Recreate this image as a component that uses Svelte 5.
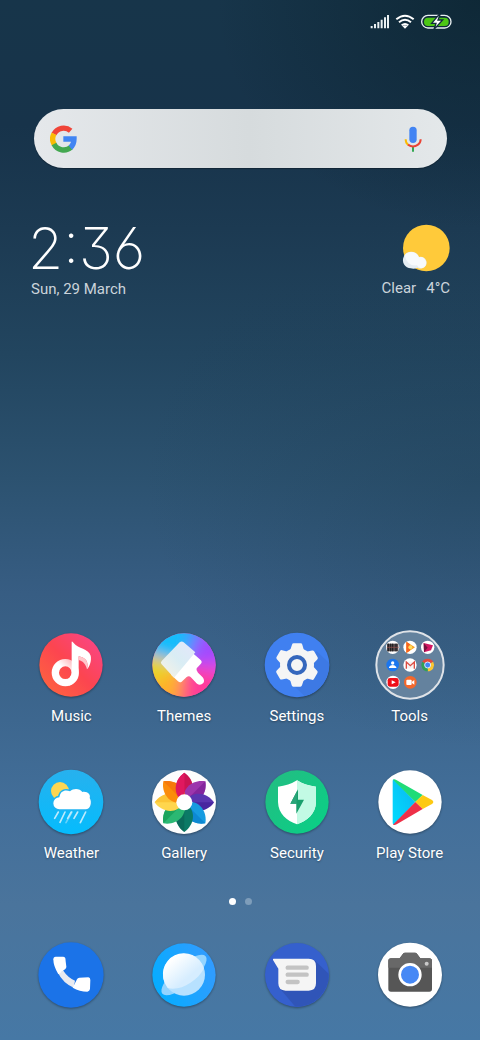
<script>
  const petals = [
    ['#e0185f', '#c2124f'],
    ['#9c35ad', '#7a1f96'],
    ['#5a35b0', '#42219a'],
    ['#169be0', '#0a80cc'],
    ['#0b7a66', '#0a6455'],
    ['#2bb873', '#159c56'],
    ['#ffd64d', '#fbbd2c'],
    ['#fb8c0a', '#f3700c']
  ];
  const rows = [
    ['Music', 'Themes', 'Settings', 'Tools'],
    ['Weather', 'Gallery', 'Security', 'Play Store']
  ];
  const dock = ['Phone', 'Browser', 'Messages', 'Camera'];
  let query = $state('');
</script>

{#snippet icon(name)}
  {#if name === 'Music'}
    <svg class="icon" viewBox="16 26 216 216" aria-hidden="true">
      <defs>
        <linearGradient id="mu" x1="0" y1="1" x2="1" y2="0"><stop offset="0" stop-color="#ff6a3c" /><stop offset=".5" stop-color="#fc4550" /><stop offset="1" stop-color="#f94590" /></linearGradient>
        <linearGradient id="mn" x1="0" y1="1" x2="1" y2="0"><stop offset="0" stop-color="#fff" /><stop offset=".55" stop-color="#fff" /><stop offset="1" stop-color="#ffb4b8" /></linearGradient>
      </defs>
      <circle cx="124" cy="134" r="95" fill="url(#mu)" />
      <circle cx="107" cy="157" r="30" fill="none" stroke="url(#mn)" stroke-width="22" />
      <path d="M126 64 Q128 62 132 68 C146 86 176 84 183 106 C186 120 181 137 172 147 C177 126 171 113 147 108 V157 A40 40 0 0 1 118 196 L122 168 Q126 163 126 157Z" fill="#fff" />
      <path d="M147 108 C171 113 177 126 172 147 C169 132 160 122 147 119Z" fill="#ffc7cb" />
    </svg>
  {:else if name === 'Themes'}
    <svg class="icon" viewBox="354 26 216 216" aria-hidden="true">
      <defs>
        <clipPath id="tc"><circle cx="462" cy="134" r="95" /></clipPath>
        <filter id="tb" x="-50%" y="-50%" width="200%" height="200%"><feGaussianBlur stdDeviation="20" /></filter>
        <linearGradient id="tp" x1="0" y1="1" x2="1" y2="0"><stop offset="0" stop-color="#fcf3e4" /><stop offset=".5" stop-color="#d9edf4" /><stop offset="1" stop-color="#e5e6fc" /></linearGradient>
      </defs>
      <g clip-path="url(#tc)">
        <path d="M354 26h216v216H354z" fill="#e75bb0" />
        <g filter="url(#tb)">
          <path d="M462 134 334 90V-10h170z" fill="#19bdfb" />
          <path d="M462 134 480 -10h80v75z" fill="#3d8cff" />
          <path d="M462 134 520 30h90v110z" fill="#a04cff" />
          <path d="M462 134 610 120v70z" fill="#e04be0" />
          <path d="M462 134 610 180v100H460z" fill="#ff3b9a" />
          <path d="M462 134 480 280h-70z" fill="#ff6c62" />
          <path d="M462 134 430 280h-110v-90z" fill="#ffb02c" />
          <path d="M462 134 310 220V90z" fill="#e8d52c" />
        </g>
      </g>
      <path d="M480 91 512 119Q518 125 512 131L500 144Q497 150 504 157L518 171Q525 181 520 188Q511 197 501 190L484 172Q477 165 470 170L455 184Q450 188 444 183L423 163Z" fill="#fff" />
      <path d="M395 132Q390 127 395 122L449 66Q455 61 461 66L496 96 432 172Z" fill="url(#tp)" />
    </svg>
  {:else if name === 'Settings'}
    <svg class="icon" viewBox="17 26 216 216" aria-hidden="true">
      <circle cx="125" cy="134" r="97" fill="#4080f0" />
      <path d="M184 93 221 127A97 97 0 0 1 148 228L107 188Z" fill="#3d79e4" />
      <g fill="#f5f5f5">
        <circle cx="125" cy="134" r="51" />
        {#each [0, 60, 120, 180, 240, 300] as a}
          <path d="M103 94 110 73Q111 69 115 69H136Q140 69 141 73L147 94Z" transform="rotate({a} 125 134)" />
        {/each}
      </g>
      <circle cx="125" cy="134" r="24" fill="none" stroke="#3567bd" stroke-width="12" />
    </svg>
  {:else if name === 'Tools'}
    <svg class="icon folder" viewBox="26 27 216 216" aria-hidden="true">
      <circle cx="134" cy="135" r="101" fill="#64829e" stroke="#dfe3e8" stroke-width="6" />
      <g fill="#fff">
        <circle cx="82" cy="82" r="20" /><circle cx="134" cy="82" r="20" /><circle cx="187" cy="82" r="20" />
        <circle cx="134" cy="135" r="20" /><circle cx="83" cy="187" r="20" />
      </g>
      <path d="M65 71h34v23H65z" fill="#554b4d" />
      <path d="M69 71v23M76 71v23M82 71v23M92 71v23" stroke="#17191c" stroke-width="3" />
      <path d="M64 82h36" stroke="#9f5551" stroke-width="2" />
      <path d="M123 65 149 82 123 99Z" fill="#fb9d1e" /><path d="M123 65 134 73V92L123 99Z" fill="#f6631f" /><circle cx="135" cy="82" r="6" fill="#ffdc5b" />
      <path d="M175 69 203 76 197 91 176 97Z" fill="#d21662" /><path d="M175 69 187 83 176 97Z" fill="#77113f" />
      <circle cx="82" cy="135" r="19" fill="#1b76ee" />
      <circle cx="82" cy="129" r="5" fill="#fff" /><path d="M71 144V141Q75 135 82 135T93 141V144Z" fill="#fff" />
      <path d="M122 125H148V145H122Z" fill="#f5f1f1" /><path d="M123 146V126L135 137 147 126V146" fill="none" stroke="#dc4c43" stroke-width="4" />
      <path d="M187 135 170.500 125.500A19 19 0 0 1 203.500 125.500Z" fill="#e34a3d" />
      <path d="M187 135 203.500 125.500A19 19 0 0 1 187 154Z" fill="#fbc632" />
      <path d="M187 135 187 154A19 19 0 0 1 170.500 125.500Z" fill="#32a056" />
      <circle cx="187" cy="135" r="9" fill="#4486f4" stroke="#dce9ff" stroke-width="3" />
      <rect x="67" y="174" width="33" height="26" rx="7" fill="#ee0e18" /><path d="M79 181 91 187 79 193Z" fill="#fff" />
      <circle cx="135" cy="187" r="19" fill="#f4682c" /><rect x="123" y="179" width="16" height="16" rx="3" fill="#fff" /><path d="M140 185 147 180V194L140 189Z" fill="#fff" />
    </svg>
  {:else if name === 'Weather'}
    <svg class="icon" viewBox="16 17 216 216" aria-hidden="true">
      <defs><linearGradient id="we" x1="0" y1="0" x2="0" y2="1"><stop offset="0" stop-color="#27b1ee" /><stop offset="1" stop-color="#05bcfd" /></linearGradient></defs>
      <circle cx="124" cy="125" r="97" fill="url(#we)" />
      <circle cx="91" cy="92" r="27" fill="#fdd652" />
      <path d="M89 147A18 18 0 0 1 89 111C92 91 107 87 121 93C132 82 151 84 158 95C174 92 184 104 180 113C188 126 182 147 168 147Z" fill="#fff" stroke="#1fb3f2" stroke-width="9" />
      <path d="M89 147A18 18 0 0 1 89 111C92 91 107 87 121 93C132 82 151 84 158 95C174 92 184 104 180 113C188 126 182 147 168 147Z" fill="#fff" />
      <g stroke="#bdeafd" stroke-width="5" stroke-linecap="round"><path d="M86 155 75 174M106 155 91 186M125 155 114 174M144 155 133 174M168 155 152 187" /><path d="M127 155 109 187" opacity=".5" /></g>
    </svg>
  {:else if name === 'Gallery'}
    <svg class="icon" viewBox="354 17 216 216" aria-hidden="true">
      <circle cx="462" cy="125" r="96" fill="#fdfdfd" />
      {#each petals as [light, dark], i}
        <g transform="rotate({i * 45} 463 126)">
          <path d="M463 126C425 104 432 58 463 37C494 58 501 104 463 126Z" fill={light} />
          <path d="M463 37C494 58 501 104 463 126Z" fill={dark} opacity=".7" />
        </g>
      {/each}
      <path d="M463 126C425 104 432 58 463 37V126Z" fill="#e0185f" />
      <circle cx="463" cy="126" r="24" fill="#fff" />
    </svg>
  {:else if name === 'Security'}
    <svg class="icon" viewBox="18 17 216 216" aria-hidden="true">
      <defs><linearGradient id="se" x1="0" y1="0" x2="1" y2="1"><stop offset="0" stop-color="#25bc82" /><stop offset="1" stop-color="#08d086" /></linearGradient></defs>
      <circle cx="126" cy="125" r="95" fill="url(#se)" />
      <path d="M126 60Q151 76 183 79V125C182 160 157 181 126 192C95 181 70 160 69 125V79Q101 76 126 60Z" fill="#fff" />
      <path d="M126 60Q151 76 183 79V125C182 160 157 181 126 192Z" fill="#c2fae4" />
      <path d="M129 87 106 130H124V160L147 118H129Z" fill="#189f6c" /><path d="M126 92 106 130H124V160Z" fill="#2aa579" />
    </svg>
  {:else if name === 'Play Store'}
    <svg class="icon" viewBox="356 17 216 216" aria-hidden="true">
      <defs><linearGradient id="pl" x1="1" y1="0" x2="0" y2="1"><stop offset="0" stop-color="#0bb5f0" /><stop offset="1" stop-color="#02dcff" /></linearGradient></defs>
      <circle cx="464" cy="125" r="95" fill="#fff" />
      <path d="M412 62Q412 57 416 58L480 125 416 193Q412 193 412 188Z" fill="url(#pl)" />
      <path d="M413 58Q417 55 423 59L502 104 480 125Z" fill="#20dc78" />
      <path d="M502 104 530 119Q538 125 530 131L502 146 480 125Z" fill="#fdc913" />
      <path d="M480 125 502 146 424 192Q418 195 413 193Z" fill="#ee3048" />
    </svg>
  {:else if name === 'Phone'}
    <svg class="icon" viewBox="14 148 216 216" aria-hidden="true">
      <circle cx="122" cy="256" r="98" fill="#1b73e8" />
      <path d="M83 249 99 243Q112 263 134 273L130 294Q97 279 83 249Z" fill="#e8eaf0" />
      <path d="M76 201H99Q104 201 105 206L108 231Q108 235 105 238L84 254Q69 229 69 209Q69 201 76 201Z" fill="#fff" />
      <path d="M127 294 140 269Q142 265 147 264L174 263Q180 264 180 271L179 298Q178 305 171 306Q148 306 127 294Z" fill="#fff" />
    </svg>
  {:else if name === 'Browser'}
    <svg class="icon" viewBox="353 148 216 216" aria-hidden="true">
      <defs>
        <linearGradient id="br" x1="0" y1=".7" x2="1" y2=".3"><stop offset="0" stop-color="#04adff" /><stop offset="1" stop-color="#339bff" /></linearGradient>
        <linearGradient id="bp" x1="0" y1="0" x2="1" y2="1"><stop offset=".2" stop-color="#fff" /><stop offset=".65" stop-color="#d6edff" /></linearGradient>
      </defs>
      <circle cx="461" cy="256" r="95" fill="url(#br)" />
      <ellipse cx="461" cy="256" rx="86" ry="30" transform="rotate(-41 461 256)" fill="#94d4ff" />
      <circle cx="461" cy="255" r="63" fill="#b7e1ff" />
      <path d="M409 290A63 63 0 1 1 521 236C500 277 447 306 412 295Z" fill="url(#bp)" />
    </svg>
  {:else if name === 'Messages'}
    <svg class="icon" viewBox="61 148 216 216" aria-hidden="true">
      <circle cx="169" cy="256" r="96" fill="#3560cd" />
      <path d="M221 211 264 252A96 96 0 0 1 164 351L117 296Z" fill="#3055b8" />
      <path d="M99 207H204Q226 207 226 229V281Q226 303 204 303H135Q113 303 113 281V237L97 211Q96 207 99 207Z" fill="#f5f5f5" />
      <path d="M141 234H198M141 255H198M141 277H171" stroke="#c3c3c3" stroke-width="13" stroke-linecap="round" />
    </svg>
  {:else}
    <svg class="icon" viewBox="400 148 216 216" aria-hidden="true">
      <circle cx="508" cy="255" r="96" fill="#fff" />
      <path d="M451 206H477L487 192Q489 189 493 189H523Q527 189 529 192L539 206H566Q574 206 574 214V298Q574 306 566 306H451Q443 306 443 298V214Q443 206 451 206Z" fill="#565656" />
      <path d="M451 206H477L487 192Q489 189 493 189H523Q527 189 529 192L539 206H566Q574 206 574 214V234H443V214Q443 206 451 206Z" fill="#686868" />
      <circle cx="508" cy="255" r="31" fill="#4688f5" stroke="#fff" stroke-width="8" />
      <circle cx="558" cy="222" r="6" fill="#c9c9c9" />
    </svg>
  {/if}
{/snippet}

<main>
  <header class="status">
    <svg class="small" viewBox="30 42 60 45" role="img" aria-label="Signal">
      <path d="M35 85V78M45 85V72M55 85V66M65 85V59M75 85V52M84 85V45" stroke="#e9f0f2" stroke-width="6" />
    </svg>
    <svg class="small" viewBox="105 42 60 45" role="img" aria-label="Wi-Fi">
      <path d="M109 58Q135 36 161 58M117 67Q135 52 153 67M125 76Q135 68 145 76" fill="none" stroke="#fff" stroke-width="6" />
      <path d="M127 78Q135 73 143 78L135 86Z" fill="#fff" />
    </svg>
    <svg class="battery" viewBox="180 42 99 45" role="img" aria-label="Charging">
      <rect x="185" y="46" width="88" height="38" rx="19" fill="none" stroke="#e9f0f2" stroke-width="4" />
      <rect x="192" y="53" width="74" height="25" rx="12" fill="#4cc615" />
      <path d="M237 44 215 70H228L222 88 248 60H234L240 44Z" fill="#fff" stroke="#132c3d" stroke-width="4" />
    </svg>
  </header>

  <form class="search" onsubmit={(e) => e.preventDefault()}>
    <button type="submit" aria-label="Search">
      <svg class="g" viewBox="89 74 81 84" aria-hidden="true">
        <g fill="none" stroke-width="16">
          <path d="M101 101A32.500 32.500 0 0 1 151 91" stroke="#f04438" />
          <path d="M102 133A33 33 0 0 1 101 100" stroke="#fabb05" />
          <path d="M152 141A33 33 0 0 1 101 131" stroke="#43a850" />
          <path d="M129 116H161Q161 133 150 142" stroke="#4185f3" />
        </g>
      </svg>
    </button>
    <input type="search" aria-label="Search the web" bind:value={query} />
    <button type="button" aria-label="Voice search">
      <svg class="mic" viewBox="491 76 54 78" aria-hidden="true">
        <rect x="507" y="78" width="22" height="49" rx="11" fill="#4284f3" />
        <path d="M518 137V153" stroke="#34a853" stroke-width="6" />
        <path d="M496 116Q496 128 504 133" fill="none" stroke="#fabb05" stroke-width="6" />
        <path d="M503 132Q518 143 533 132Q541 126 541 116" fill="none" stroke="#ea4335" stroke-width="6" />
      </svg>
    </button>
  </form>

  <section class="glance">
    <div class="when">
      <time class="clock">2:36</time>
      <p>Sun, 29 March</p>
    </div>
    <div class="weather">
      <svg viewBox="93 24 147 153" aria-hidden="true">
        <circle cx="169" cy="99" r="70" fill="#ffca3a" />
        <path d="M122 160A24 24 0 0 1 101 126C107 106 139 105 147 126A17 17 0 0 1 157 160Q148 162 142 158Q133 163 122 160Z" fill="#e6edf3" />
        <path d="M104 122C112 106 140 107 147 127A17 17 0 0 1 160 158Q146 163 141 151Q113 155 104 122Z" fill="#fff" opacity=".7" />
      </svg>
      <p><span>Clear</span><span>4°C</span></p>
    </div>
  </section>

  <section class="apps">
    {#each rows.flat() as name}
      <button type="button" class="app">
        {@render icon(name)}
        <span>{name}</span>
      </button>
    {/each}
  </section>

  <div class="pages" role="group" aria-label="Pages"><i class="on"></i><i></i></div>

  <nav class="dock">
    {#each dock as name}
      <button type="button" class="app" aria-label={name}>{@render icon(name)}</button>
    {/each}
  </nav>
</main>

<style>
  :global(body) {
    margin: 0;
    background: #1b384e;
  }
  main {
    box-sizing: border-box;
    min-height: 100vh;
    display: flex;
    flex-direction: column;
    padding-bottom: 29px;
    color: #fff;
    font-family: Roboto, sans-serif;
    font-size: 15px;
    line-height: 20px;
    background:
      radial-gradient(ellipse 55% 22% at 100% 0, rgba(9, 32, 42, 0.6), transparent),
      radial-gradient(ellipse 70% 26% at 100% 46%, rgba(30, 62, 84, 0.35), transparent),
      linear-gradient(#17354a 0, #17334a 12%, #1c3a52 22%, #22455f 34%, #2c5270 46%, #375d83 57%, #3b648b 66%, #436f9a 78%, #4a749c 87%, #4678a5 100%);
  }
  button {
    border: 0;
    padding: 0;
    background: none;
    color: inherit;
    font: inherit;
    cursor: pointer;
  }
  svg {
    display: block;
  }
  p {
    margin: 0;
  }
  .status {
    display: flex;
    justify-content: flex-end;
    gap: 5px;
    padding: 14px 27px 0 0;
  }
  .small {
    width: 20px;
    height: 15px;
  }
  .battery {
    width: 33px;
    height: 15px;
  }
  .search {
    display: flex;
    align-items: center;
    height: 59px;
    margin: 80px 33px 0 34px;
    padding: 0 25px 0 16px;
    box-sizing: border-box;
    border-radius: 30px;
    background: linear-gradient(90deg, #e5e8eb, #d6dbdd 52%, #e4e8ea);
    box-shadow: 0 1px 1px rgba(0, 0, 0, 0.3);
  }
  .search input {
    flex: 1;
    min-width: 0;
    height: 40px;
    margin: 0 12px;
    border: 0;
    outline: 0;
    background: none;
    font: inherit;
    color: #223;
  }
  .g {
    width: 27px;
    height: 28px;
  }
  .mic {
    width: 18px;
    height: 26px;
  }
  .glance {
    display: flex;
    justify-content: space-between;
    padding: 55px 30px 0 28px;
    color: #cbd4db;
  }
  .when p {
    padding-left: 3px;
  }
  .clock {
    display: block;
    height: 56px;
    line-height: 51px;
    font-family: Inter, Roboto, sans-serif;
    font-size: 57px;
    font-weight: 250;
    font-feature-settings: 'cv09', 'cv03';
    color: #fff;
  }
  .weather {
    display: flex;
    flex-direction: column;
    align-items: flex-end;
  }
  .weather svg {
    width: 49px;
    height: 51px;
    margin-bottom: 4px;
  }
  .weather p {
    display: flex;
    gap: 10px;
  }
  .apps,
  .dock {
    display: grid;
    grid-template-columns: repeat(4, 1fr);
    padding: 0 14px 0 15px;
  }
  .apps {
    margin-top: auto;
    row-gap: 40px;
  }
  .app {
    display: flex;
    flex-direction: column;
    align-items: center;
    gap: 5px;
    text-shadow: 0 1px 2px rgba(0, 0, 0, 0.35);
  }
  .icon {
    width: 72px;
    height: 72px;
    filter: drop-shadow(0 1px 1px rgba(0, 0, 0, 0.35));
  }
  .folder {
    filter: none;
  }
  .pages {
    display: flex;
    justify-content: center;
    gap: 9px;
    margin: 35px 0 34px;
  }
  .pages i {
    width: 7px;
    height: 7px;
    border-radius: 50%;
    background: #7e9dba;
  }
  .pages .on {
    background: #fff;
  }
</style>
